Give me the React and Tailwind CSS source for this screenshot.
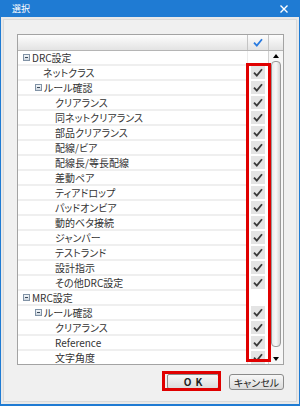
const rows = [
  { label: "DRC設定", level: 0, group: true },
  { label: "ネットクラス", level: 1 },
  { label: "ルール確認", level: 1, group: true, checked: true },
  { label: "クリアランス", level: 2 },
  { label: "同ネットクリアランス", level: 2 },
  { label: "部品クリアランス", level: 2 },
  { label: "配線/ビア", level: 2 },
  { label: "配線長/等長配線", level: 2 },
  { label: "差動ペア", level: 2 },
  { label: "ティアドロップ", level: 2 },
  { label: "パッドオンビア", level: 2 },
  { label: "動的ベタ接続", level: 2 },
  { label: "ジャンパー", level: 2 },
  { label: "テストランド", level: 2 },
  { label: "設計指示", level: 2 },
  { label: "その他DRC設定", level: 2 },
  { label: "MRC設定", level: 0, group: true },
  { label: "ルール確認", level: 1, group: true, checked: true },
  { label: "クリアランス", level: 2 },
  { label: "Reference", level: 2 },
  { label: "文字角度", level: 2 },
];

const indent = ["pl-[13px]", "pl-[25px]", "pl-[37px]"];

function Check({ className = "" }) {
  return (
    <svg width="10" height="9" viewBox="0 0 10 9" className={className}>
      <path d="M1 4.6 L3.8 7.6 L9 1.2" fill="none" stroke="currentColor" strokeWidth="1.8" />
    </svg>
  );
}

function Minus() {
  return (
    <span className="mr-[2px] flex h-[7px] w-[7px] items-center justify-center border border-[#8193a6] bg-gradient-to-b from-[#f4f7fa] to-[#cdd6df]">
      <span className="h-px w-[3px] bg-[#3b4a5a]" />
    </span>
  );
}

function Row({ row }) {
  const hasBox = !(row.group && row.level === 0);
  return (
    <div className="flex h-[15px]">
      <div
        className={`flex flex-1 items-center border-b-2 border-r border-b-[#efefef] border-r-[#ececec] ${
          row.group ? (row.level === 0 ? "pl-[5px]" : "pl-[17px]") : indent[row.level]
        }`}
      >
        {row.group && <Minus />}
        <span className="whitespace-nowrap leading-none">{row.label}</span>
      </div>
      <div className="flex w-[20px] items-start pl-[3px]">
        {hasBox && (
          <span className="flex h-[13px] w-[14px] items-center justify-center bg-[#e4e4e4] text-[#3a3a3a]">
            <Check />
          </span>
        )}
      </div>
    </div>
  );
}

export default function App() {
  return (
    <div
      className="relative flex h-[406px] w-[300px] flex-col bg-[#1f7bd3] text-[10px] text-[#333] [font-feature-settings:'palt']"
      style={{ fontFamily: '"Noto Sans CJK JP", "Noto Sans", sans-serif' }}
    >
      <div className="flex h-[17px] items-center justify-between pl-[12px] pr-[12px] text-white">
        <span className="text-[9px]">選択</span>
        <svg width="8" height="8" viewBox="0 0 8 8">
          <path d="M0.5 0.5 L7.5 7.5 M7.5 0.5 L0.5 7.5" stroke="white" strokeWidth="1.4" />
        </svg>
      </div>
      <div className="mx-px mb-[2px] flex flex-1 flex-col bg-[#e9e9e9] p-[2px]">
        <div className="flex flex-1 flex-col border border-[#dadada] bg-[#f0f0f0] pl-[13px] pr-[12px] pt-[14px]">
          <div className="flex h-[331px] flex-col border border-[#a3a3a3] bg-white">
            <div className="flex h-[16px] border-b border-[#b5b5b5] bg-gradient-to-b from-[#fdfdfd] to-[#e3e3e3]">
              <div className="flex-1 border-r border-[#c4c4c4]" />
              <div className="flex w-[21px] items-center justify-center border-r border-[#c4c4c4] text-[#2a7be0]">
                <Check />
              </div>
              <div className="w-[14px]" />
            </div>
            <div className="flex flex-1 overflow-hidden">
              <div className="flex-1 overflow-hidden">
                {rows.map((row, i) => (
                  <Row key={i} row={row} />
                ))}
              </div>
              <div className="flex w-[15px] flex-col items-center border-l border-[#d0d0d0] bg-[#f7f7f7]">
                <div className="mt-[3px] h-0 w-0 border-x-[3px] border-b-[4px] border-x-transparent border-b-black" />
                <div className="mt-[3px] h-[286px] w-[10px] rounded-[4px] border border-[#9a9a9a] bg-gradient-to-r from-[#e9e9e9] via-[#f8f8f8] to-[#d6d6d6]" />
                <div className="flex-1" />
                <div className="mb-[3px] h-0 w-0 border-x-[3px] border-t-[4px] border-x-transparent border-t-black" />
              </div>
            </div>
          </div>
          <div className="mt-[9px] flex justify-end gap-[10px]">
            <button className="flex h-[15px] w-[52px] items-center justify-center rounded-[2px] border border-[#8a8a8a] bg-gradient-to-b from-[#f7f7f7] to-[#dcdcdc] text-[10px] font-bold tracking-[4px] text-[#222] pl-[4px]">
              OK
            </button>
            <button className="flex h-[16px] w-[55px] items-center justify-center rounded-[3px] border border-[#8a8a8a] bg-gradient-to-b from-[#f7f7f7] to-[#dcdcdc] text-[10px] text-[#222]">
              キャンセル
            </button>
          </div>
        </div>
      </div>
      <div className="absolute left-[246px] top-[63px] h-[299px] w-[25px] border-[3px] border-[#e00000]" />
      <div className="absolute left-[162px] top-[371px] h-[20px] w-[59px] border-[3px] border-[#e00000]" />
    </div>
  );
}
